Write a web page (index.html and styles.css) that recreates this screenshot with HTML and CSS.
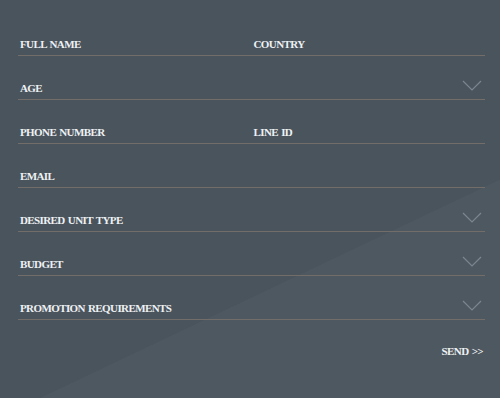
FILE: index.html
```html
<!DOCTYPE html>
<html lang="en">
<head>
<meta charset="utf-8">
<title>Register</title>
<link rel="stylesheet" href="styles.css">
</head>
<body>
<form class="form">
  <div class="row two">
    <label class="field">FULL NAME</label>
    <label class="field">COUNTRY</label>
  </div>
  <div class="row select">
    <label class="field">AGE</label>
    <svg class="chev" width="20" height="11" viewBox="0 0 20 11"><path d="M1 1 L10 10 L19 1" fill="none" stroke="#7b8691" stroke-width="1.2"/></svg>
  </div>
  <div class="row two">
    <label class="field">PHONE NUMBER</label>
    <label class="field">LINE ID</label>
  </div>
  <div class="row">
    <label class="field">EMAIL</label>
  </div>
  <div class="row select">
    <label class="field">DESIRED UNIT TYPE</label>
    <svg class="chev" width="20" height="11" viewBox="0 0 20 11"><path d="M1 1 L10 10 L19 1" fill="none" stroke="#7b8691" stroke-width="1.2"/></svg>
  </div>
  <div class="row select">
    <label class="field">BUDGET</label>
    <svg class="chev" width="20" height="11" viewBox="0 0 20 11"><path d="M1 1 L10 10 L19 1" fill="none" stroke="#7b8691" stroke-width="1.2"/></svg>
  </div>
  <div class="row select">
    <label class="field">PROMOTION REQUIREMENTS</label>
    <svg class="chev" width="20" height="11" viewBox="0 0 20 11"><path d="M1 1 L10 10 L19 1" fill="none" stroke="#7b8691" stroke-width="1.2"/></svg>
  </div>
  <div class="actions">
    <span class="send">SEND &gt;&gt;</span>
  </div>
</form>
</body>
</html>
```
FILE: styles.css
```css
html, body {
  margin: 0;
  height: 100%;
}
body {
  width: 500px;
  height: 398px;
  overflow: hidden;
  background: linear-gradient(154.6deg, #4a545d 65.6%, #4e5861 65.7%);
  font-family: "Liberation Serif", "Times New Roman", serif;
  color: #eef1f3;
}
.form {
  padding: 12px 15px 0 18px;
}
.row {
  height: 44px;
  box-sizing: border-box;
  border-bottom: 1px solid #726d69;
  display: flex;
  align-items: flex-end;
  padding-bottom: 4px;
}
.row.two {
  display: grid;
  grid-template-columns: 1fr 1fr;
  align-items: end;
}
.row.select {
  justify-content: space-between;
}
.field {
  display: block;
  padding-left: 2px;
  font-size: 11px;
  line-height: 13px;
  font-weight: bold;
  letter-spacing: -0.6px;
  word-spacing: 1px;
}
.chev {
  display: block;
  margin: 0 3px 4px 0;
}
.actions {
  display: flex;
  justify-content: flex-end;
  padding: 25px 2px 0 0;
}
.send {
  font-size: 11px;
  line-height: 13px;
  font-weight: bold;
  letter-spacing: -0.6px;
  word-spacing: 1px;
}
```
